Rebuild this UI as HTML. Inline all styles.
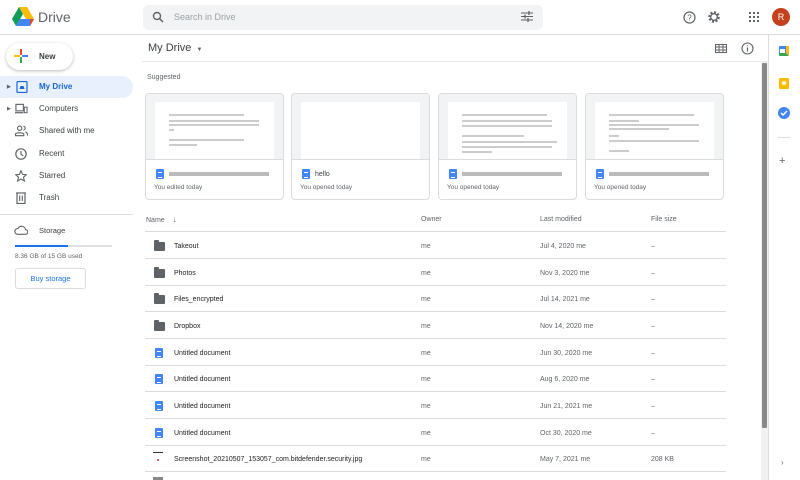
<!DOCTYPE html>
<html><head><meta charset="utf-8"><style>
*{box-sizing:border-box;margin:0;padding:0}
body{width:800px;height:480px;overflow:hidden;background:#fff;font-family:"Liberation Sans",Arial,sans-serif;color:#3c4043;position:relative}
.a{position:absolute}
.hdr{left:0;top:0;width:800px;height:35px;border-bottom:1px solid #dadce0}
.search{left:143px;top:5px;width:400px;height:25px;background:#f1f3f4;border-radius:6px}
.nav{left:0;width:133px;height:22px;font-size:8px;color:#3c4043;line-height:22px;padding-left:39px}
.nav.sel{background:#e8f0fe;color:#1967d2;font-weight:bold;border-radius:0 11px 11px 0}
.ic{position:absolute;left:14px;top:5px;width:12px;height:12px}
.card{width:139px;height:107px;border:1px solid #dadce0;border-radius:4px;top:93px;overflow:hidden}
.thumb{height:66px;background:#f1f3f4;border-bottom:1px solid #dadce0;position:relative}
.page{position:absolute;left:9px;top:8px;right:9px;bottom:0;background:#fff}
.ln{position:absolute;height:2px;background:#ccc}
.ct{position:absolute;left:10px;top:75px;font-size:7px;color:#3c4043}
.cs{position:absolute;left:8px;top:90px;font-size:6.5px;color:#5f6368}
.dico{display:inline-block;width:8px;height:10px;background:#4285f4;border-radius:1px;vertical-align:middle;margin-right:5px;position:relative}
.dico:after{content:"";position:absolute;left:2px;top:3px;width:4px;height:4px;border-top:1px solid #fff;border-bottom:1px solid #fff}
.blur{display:inline-block;height:4px;background:#aaa;vertical-align:middle;opacity:.8}
.row{left:145px;width:581px;height:27px;border-bottom:1px solid #dadce0;font-size:7px;line-height:26px}
.row span{position:absolute;top:2px}
.fold{position:absolute;left:9px;top:10px;width:11px;height:9px;background:#5f6368;border-radius:1px}
.fold:before{content:"";position:absolute;left:0;top:-2px;width:5px;height:3px;background:#5f6368;border-radius:1px 1px 0 0}
.doc{position:absolute;left:10px;top:9px;width:8px;height:10px;background:#4285f4;border-radius:1px}
.doc:after{content:"";position:absolute;left:2px;top:3px;width:4px;height:4px;border-top:1px solid #fff;border-bottom:1px solid #fff}
.n{left:29px;color:#202124}.o{left:276px;color:#5f6368}.m{left:395px;color:#5f6368}.s{left:506px;color:#5f6368}
</style></head><body>
<div class="a hdr"></div>
<svg class="a" style="left:12px;top:7px" width="22" height="19" viewBox="0 0 22 19"><path d="M7 0h8l7 12h-8z" fill="#fbbc04"/><path d="M7 0L0 12l4 7 7-12z" fill="#0f9d58"/><path d="M4 19h14l4-7H8z" fill="#4285f4"/><path d="M18 19l4-7h-4z" fill="#ea4335"/></svg>
<div class="a" style="left:38px;top:9px;font-size:14px;color:#5f6368">Drive</div>
<div class="a search"></div>
<svg class="a" style="left:152px;top:11px" width="12" height="12" viewBox="0 0 12 12"><circle cx="5" cy="5" r="3.5" stroke="#5f6368" stroke-width="1.4" fill="none"/><path d="M7.5 7.5l3.5 3.5" stroke="#5f6368" stroke-width="1.5"/></svg>
<div class="a" style="left:174px;top:12px;font-size:9px;color:#9aa0a6">Search in Drive</div>
<svg class="a" style="left:521px;top:11px" width="12" height="11" viewBox="0 0 12 11"><path d="M0 2h12M0 5.5h12M0 9h12" stroke="#5f6368" stroke-width="1"/><path d="M8 0v4M4 3.5v4M7 7v4" stroke="#5f6368" stroke-width="1.3"/></svg>
<svg class="a" style="left:683px;top:11px" width="13" height="13" viewBox="0 0 13 13"><circle cx="6.5" cy="6.5" r="5.5" stroke="#5f6368" stroke-width="1.2" fill="none"/><text x="6.5" y="9.5" font-size="8" text-anchor="middle" fill="#5f6368" font-family="Liberation Sans">?</text></svg>
<svg class="a" style="left:707px;top:10px" width="14" height="14" viewBox="0 0 14 14"><circle cx="7" cy="7" r="4.5" stroke="#5f6368" stroke-width="2.5" stroke-dasharray="2 1.5" fill="none"/><circle cx="7" cy="7" r="3.3" stroke="#5f6368" stroke-width="1.3" fill="none"/></svg>
<svg class="a" style="left:749px;top:12px" width="10" height="10" viewBox="0 0 10 10"><g fill="#5f6368"><rect x="0" y="0" width="2" height="2"/><rect x="4" y="0" width="2" height="2"/><rect x="8" y="0" width="2" height="2"/><rect x="0" y="4" width="2" height="2"/><rect x="4" y="4" width="2" height="2"/><rect x="8" y="4" width="2" height="2"/><rect x="0" y="8" width="2" height="2"/><rect x="4" y="8" width="2" height="2"/><rect x="8" y="8" width="2" height="2"/></g></svg>
<div class="a" style="left:772px;top:8px;width:18px;height:18px;border-radius:50%;background:#c5401c;color:#fff;font-size:9px;text-align:center;line-height:18px">R</div>

<div class="a" style="left:6px;top:43px;width:67px;height:27px;border-radius:14px;box-shadow:0 1px 3px rgba(60,64,67,.35);background:#fff"></div>
<svg class="a" style="left:14px;top:49px" width="14" height="14" viewBox="0 0 14 14"><path d="M7 0v6" stroke="#ea4335" stroke-width="2"/><path d="M7 8v6" stroke="#34a853" stroke-width="2"/><path d="M0 7h6" stroke="#fbbc04" stroke-width="2"/><path d="M8 7h6" stroke="#4285f4" stroke-width="2"/></svg>
<div class="a" style="left:39px;top:52px;font-size:8px;font-weight:bold;color:#3c4043">New</div>
<div class="a nav sel" style="top:76px"><span style="position:absolute;left:7px;top:0;font-size:5px;color:#5f6368">▶</span><svg class="ic" viewBox="0 0 12 12" style="left:16px"><rect x="1" y="0.5" width="10" height="11" rx="1" fill="none" stroke="#1967d2" stroke-width="1.2"/><path d="M3.5 8h5l-1-3h-3z" fill="#1967d2"/></svg>My Drive</div>
<div class="a nav" style="top:98px"><span style="position:absolute;left:7px;top:0;font-size:5px;color:#5f6368">▶</span><svg class="ic" viewBox="0 0 14 12" style="left:15px;width:13px"><rect x="1" y="1" width="8" height="7" fill="none" stroke="#5f6368" stroke-width="1.2"/><path d="M0 10h9" stroke="#5f6368" stroke-width="1.3"/><rect x="10" y="4" width="3" height="6" fill="none" stroke="#5f6368" stroke-width="1.1"/></svg>Computers</div>
<div class="a nav" style="top:120px"><svg class="ic" viewBox="0 0 14 12" style="left:15px;width:13px"><circle cx="5" cy="3" r="2.3" fill="none" stroke="#5f6368" stroke-width="1.2"/><path d="M0.5 11v-1.5c0-2 9-2 9 0V11zM9 1a2 2 0 010 4M11 7c2 .5 2.5 1.5 2.5 4" fill="none" stroke="#5f6368" stroke-width="1.2"/></svg>Shared with me</div>
<div class="a nav" style="top:143px"><svg class="ic" viewBox="0 0 12 12" style="left:15px"><circle cx="6" cy="6" r="5.2" fill="none" stroke="#5f6368" stroke-width="1.2"/><path d="M6 3v3.3l2.2 1.5" fill="none" stroke="#5f6368" stroke-width="1.1"/></svg>Recent</div>
<div class="a nav" style="top:165px"><svg class="ic" viewBox="0 0 12 12" style="left:15px"><path d="M6 .8l1.6 3.6 3.8.3-2.9 2.5.9 3.8L6 9 2.6 11l.9-3.8L.6 4.7l3.8-.3z" fill="none" stroke="#5f6368" stroke-width="1.1"/></svg>Starred</div>
<div class="a nav" style="top:187px"><svg class="ic" viewBox="0 0 12 12" style="left:15px"><rect x="2" y="1" width="8" height="10.5" fill="none" stroke="#5f6368" stroke-width="1.2"/><path d="M4.7 3.5v5.5M7.3 3.5v5.5M1 1h10" stroke="#5f6368" stroke-width="1.1"/></svg>Trash</div>
<div class="a" style="left:0;top:214px;width:133px;height:1px;background:#dadce0"></div>
<svg class="a" style="left:14px;top:225px" width="14" height="10" viewBox="0 0 14 10"><path d="M3.5 9.3h8a2.3 2.3 0 000-4.6A4 4 0 004 3.5 2.9 2.9 0 003.5 9.3z" fill="none" stroke="#5f6368" stroke-width="1.1"/></svg>
<div class="a" style="left:39px;top:226px;font-size:7.5px;color:#3c4043">Storage</div>
<div class="a" style="left:15px;top:245px;width:97px;height:2px;background:#e0e0e0"></div>
<div class="a" style="left:15px;top:245px;width:53px;height:2px;background:#1a73e8"></div>
<div class="a" style="left:15px;top:253px;font-size:6.5px;color:#5f6368">8.36 GB of 15 GB used</div>
<div class="a" style="left:15px;top:268px;width:71px;height:21px;border:1px solid #dadce0;border-radius:3px;font-size:7.5px;color:#1a73e8;text-align:center;line-height:19px">Buy storage</div>

<div class="a" style="left:148px;top:42px;font-size:11px;color:#3c4043">My Drive <span style="font-size:6px;color:#5f6368;margin-left:2px">▼</span></div>
<svg class="a" style="left:715px;top:44px" width="12" height="9" viewBox="0 0 12 9"><rect x=".5" y=".5" width="11" height="8" fill="none" stroke="#5f6368"/><path d="M0 3h12M0 6h12M4 0v9M8 0v9" stroke="#5f6368"/></svg>
<svg class="a" style="left:741px;top:42px" width="13" height="13" viewBox="0 0 13 13"><circle cx="6.5" cy="6.5" r="5.5" stroke="#5f6368" stroke-width="1.1" fill="none"/><path d="M6.5 5.5v4M6.5 3.3v1" stroke="#5f6368" stroke-width="1.2"/></svg>
<div class="a" style="left:142px;top:61px;width:626px;height:1px;background:#e3e8f0"></div>
<div class="a" style="left:147px;top:74px;font-size:7px;color:#5f6368">Suggested</div>

<div class="a card" style="left:145px"><div class="thumb"><div class="page"><div class="ln" style="left:14px;top:12px;width:75px"></div><div class="ln" style="left:14px;top:18px;width:90px"></div><div class="ln" style="left:14px;top:22px;width:90px"></div><div class="ln" style="left:14px;top:27px;width:5px"></div><div class="ln" style="left:14px;top:37px;width:75px"></div><div class="ln" style="left:14px;top:42px;width:28px"></div></div></div><div class="ct"><span class="dico"></span><span class="blur" style="width:100px"></span></div><div class="cs">You edited today</div></div>
<div class="a card" style="left:291px"><div class="thumb"><div class="page"></div></div><div class="ct"><span class="dico"></span>hello</div><div class="cs">You opened today</div></div>
<div class="a card" style="left:438px"><div class="thumb"><div class="page"><div class="ln" style="left:14px;top:12px;width:85px"></div><div class="ln" style="left:14px;top:18px;width:90px"></div><div class="ln" style="left:14px;top:23px;width:90px"></div><div class="ln" style="left:14px;top:33px;width:62px"></div><div class="ln" style="left:14px;top:39px;width:95px"></div><div class="ln" style="left:14px;top:44px;width:90px"></div><div class="ln" style="left:14px;top:49px;width:30px"></div></div></div><div class="ct"><span class="dico"></span><span class="blur" style="width:100px"></span></div><div class="cs">You opened today</div></div>
<div class="a card" style="left:585px"><div class="thumb"><div class="page"><div class="ln" style="left:14px;top:12px;width:85px"></div><div class="ln" style="left:14px;top:18px;width:30px"></div><div class="ln" style="left:14px;top:22px;width:90px"></div><div class="ln" style="left:14px;top:26px;width:60px"></div><div class="ln" style="left:14px;top:33px;width:10px"></div><div class="ln" style="left:14px;top:38px;width:90px"></div><div class="ln" style="left:14px;top:48px;width:20px"></div></div></div><div class="ct"><span class="dico"></span><span class="blur" style="width:100px"></span></div><div class="cs">You opened today</div></div>

<div class="a" style="left:145px;top:207px;width:581px;height:25px;border-bottom:1px solid #dadce0;font-size:7px;color:#5f6368;line-height:26px">
<span class="a" style="left:1px">Name <span style="margin-left:6px;font-size:8px">↓</span></span><span class="a" style="left:276px">Owner</span><span class="a" style="left:395px">Last modified</span><span class="a" style="left:506px">File size</span></div>

<div class="a row" style="top:232px"><i class="fold"></i><span class="n">Takeout</span><span class="o">me</span><span class="m">Jul 4, 2020 me</span><span class="s">–</span></div>
<div class="a row" style="top:259px"><i class="fold"></i><span class="n">Photos</span><span class="o">me</span><span class="m">Nov 3, 2020 me</span><span class="s">–</span></div>
<div class="a row" style="top:285px"><i class="fold"></i><span class="n">Files_encrypted</span><span class="o">me</span><span class="m">Jul 14, 2021 me</span><span class="s">–</span></div>
<div class="a row" style="top:312px"><i class="fold"></i><span class="n">Dropbox</span><span class="o">me</span><span class="m">Nov 14, 2020 me</span><span class="s">–</span></div>
<div class="a row" style="top:339px"><i class="doc"></i><span class="n">Untitled document</span><span class="o">me</span><span class="m">Jun 30, 2020 me</span><span class="s">–</span></div>
<div class="a row" style="top:365px"><i class="doc"></i><span class="n">Untitled document</span><span class="o">me</span><span class="m">Aug 6, 2020 me</span><span class="s">–</span></div>
<div class="a row" style="top:392px"><i class="doc"></i><span class="n">Untitled document</span><span class="o">me</span><span class="m">Jun 21, 2021 me</span><span class="s">–</span></div>
<div class="a row" style="top:419px"><i class="doc"></i><span class="n">Untitled document</span><span class="o">me</span><span class="m">Oct 30, 2020 me</span><span class="s">–</span></div>
<div class="a row" style="top:445px"><i style="position:absolute;left:8px;top:7px;width:10px;height:14px;border-top:1px solid #333"><i style="position:absolute;left:4px;top:6px;width:2px;height:2px;background:#c33;border-radius:50%"></i></i><span class="n">Screenshot_20210507_153057_com.bitdefender.security.jpg</span><span class="o">me</span><span class="m">May 7, 2021 me</span><span class="s">208 KB</span></div>
<div class="a" style="left:153px;top:477px;width:10px;height:3px;background:#888"></div>

<div class="a" style="left:761px;top:62px;width:7px;height:418px;background:#f1f1f1"></div>
<div class="a" style="left:762px;top:63px;width:5px;height:365px;background:#888;border-radius:1px"></div>

<div class="a" style="left:768px;top:35px;width:1px;height:445px;background:#dadce0"></div>
<div class="a" style="left:779px;top:46px;width:10px;height:10px;background:#4285f4;border-radius:1px;border-bottom:3px solid #34a853;border-right:3px solid #fbbc04"></div>
<div class="a" style="left:780px;top:49px;width:5px;height:4px;background:#fff"></div>
<div class="a" style="left:779px;top:78px;width:10px;height:11px;background:#fbbc04;border-radius:1px"></div>
<div class="a" style="left:782px;top:81px;width:4px;height:4px;background:#fff;border-radius:50%"></div>
<div class="a" style="left:778px;top:107px;width:12px;height:12px;background:#4285f4;border-radius:50%"></div>
<svg class="a" style="left:780px;top:109px" width="8" height="8" viewBox="0 0 8 8"><path d="M1 4l2 2 4-4" stroke="#fff" stroke-width="1.5" fill="none"/></svg>
<div class="a" style="left:778px;top:137px;width:12px;height:1px;background:#dadce0"></div>
<div class="a" style="left:779px;top:155px;font-size:11px;color:#5f6368">+</div>
<div class="a" style="left:781px;top:458px;font-size:8px;color:#5f6368">›</div>
</body></html>
